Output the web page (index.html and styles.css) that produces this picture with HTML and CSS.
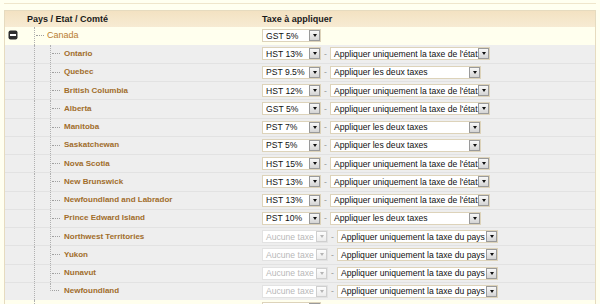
FILE: index.html
```html
<!DOCTYPE html>
<html lang="fr">
<head>
  <meta charset="UTF-8" />
  <title>Taxes par région</title>
  <link rel="stylesheet" href="styles.css">
</head>
<body>
  <div class="top-bar"></div>

  <!-- Tax tree -->
  <div class="tax-tree">
    <div class="head">
      <div class="col-name">Pays / Etat / Comté</div>
      <div class="col-tax">Taxe à appliquer</div>
    </div>

    <div class="row country">
      <div class="col-name">
        <span class="toggle">
          <svg width="10" height="10" viewBox="0 0 10 10"><rect x="0.5" y="0.5" width="9" height="9" rx="2" fill="#2e2e2e"/><rect x="2" y="4" width="6" height="2" fill="#fff"/></svg>
        </span>
        <span class="tee"><i></i></span>
        <span class="name">Canada</span>
      </div>
      <div class="col-tax">
        <span class="select tax"><span class="val">GST 5%</span><span class="arrow"></span></span>
      </div>
    </div>

    <div class="row">
      <div class="col-name"><span class="spacer"></span><span class="pipe"></span><span class="tee sub"><i></i></span><span class="name prov">Ontario</span></div>
      <div class="col-tax">
        <span class="select tax"><span class="val">HST 13%</span><span class="arrow"></span></span>
        <span class="sep">-</span>
        <span class="select mode-state"><span class="val">Appliquer uniquement la taxe de l'état</span><span class="arrow"></span></span>
      </div>
    </div>

    <div class="row">
      <div class="col-name"><span class="spacer"></span><span class="pipe"></span><span class="tee sub"><i></i></span><span class="name prov">Quebec</span></div>
      <div class="col-tax">
        <span class="select tax"><span class="val">PST 9.5%</span><span class="arrow"></span></span>
        <span class="sep">-</span>
        <span class="select mode-both"><span class="val">Appliquer les deux taxes</span><span class="arrow"></span></span>
      </div>
    </div>

    <div class="row">
      <div class="col-name"><span class="spacer"></span><span class="pipe"></span><span class="tee sub"><i></i></span><span class="name prov">British Columbia</span></div>
      <div class="col-tax">
        <span class="select tax"><span class="val">HST 12%</span><span class="arrow"></span></span>
        <span class="sep">-</span>
        <span class="select mode-state"><span class="val">Appliquer uniquement la taxe de l'état</span><span class="arrow"></span></span>
      </div>
    </div>

    <div class="row">
      <div class="col-name"><span class="spacer"></span><span class="pipe"></span><span class="tee sub"><i></i></span><span class="name prov">Alberta</span></div>
      <div class="col-tax">
        <span class="select tax"><span class="val">GST 5%</span><span class="arrow"></span></span>
        <span class="sep">-</span>
        <span class="select mode-state"><span class="val">Appliquer uniquement la taxe de l'état</span><span class="arrow"></span></span>
      </div>
    </div>

    <div class="row">
      <div class="col-name"><span class="spacer"></span><span class="pipe"></span><span class="tee sub"><i></i></span><span class="name prov">Manitoba</span></div>
      <div class="col-tax">
        <span class="select tax"><span class="val">PST 7%</span><span class="arrow"></span></span>
        <span class="sep">-</span>
        <span class="select mode-both"><span class="val">Appliquer les deux taxes</span><span class="arrow"></span></span>
      </div>
    </div>

    <div class="row">
      <div class="col-name"><span class="spacer"></span><span class="pipe"></span><span class="tee sub"><i></i></span><span class="name prov">Saskatchewan</span></div>
      <div class="col-tax">
        <span class="select tax"><span class="val">PST 5%</span><span class="arrow"></span></span>
        <span class="sep">-</span>
        <span class="select mode-both"><span class="val">Appliquer les deux taxes</span><span class="arrow"></span></span>
      </div>
    </div>

    <div class="row">
      <div class="col-name"><span class="spacer"></span><span class="pipe"></span><span class="tee sub"><i></i></span><span class="name prov">Nova Scotia</span></div>
      <div class="col-tax">
        <span class="select tax"><span class="val">HST 15%</span><span class="arrow"></span></span>
        <span class="sep">-</span>
        <span class="select mode-state"><span class="val">Appliquer uniquement la taxe de l'état</span><span class="arrow"></span></span>
      </div>
    </div>

    <div class="row">
      <div class="col-name"><span class="spacer"></span><span class="pipe"></span><span class="tee sub"><i></i></span><span class="name prov">New Brunswick</span></div>
      <div class="col-tax">
        <span class="select tax"><span class="val">HST 13%</span><span class="arrow"></span></span>
        <span class="sep">-</span>
        <span class="select mode-state"><span class="val">Appliquer uniquement la taxe de l'état</span><span class="arrow"></span></span>
      </div>
    </div>

    <div class="row">
      <div class="col-name"><span class="spacer"></span><span class="pipe"></span><span class="tee sub"><i></i></span><span class="name prov">Newfoundland and Labrador</span></div>
      <div class="col-tax">
        <span class="select tax"><span class="val">HST 13%</span><span class="arrow"></span></span>
        <span class="sep">-</span>
        <span class="select mode-state"><span class="val">Appliquer uniquement la taxe de l'état</span><span class="arrow"></span></span>
      </div>
    </div>

    <div class="row">
      <div class="col-name"><span class="spacer"></span><span class="pipe"></span><span class="tee sub"><i></i></span><span class="name prov">Prince Edward Island</span></div>
      <div class="col-tax">
        <span class="select tax"><span class="val">PST 10%</span><span class="arrow"></span></span>
        <span class="sep">-</span>
        <span class="select mode-both"><span class="val">Appliquer les deux taxes</span><span class="arrow"></span></span>
      </div>
    </div>

    <div class="row">
      <div class="col-name"><span class="spacer"></span><span class="pipe"></span><span class="tee sub"><i></i></span><span class="name prov">Northwest Territories</span></div>
      <div class="col-tax">
        <span class="select tax off"><span class="val">Aucune taxe</span><span class="arrow"></span></span>
        <span class="sep">-</span>
        <span class="select mode-country"><span class="val">Appliquer uniquement la taxe du pays</span><span class="arrow"></span></span>
      </div>
    </div>

    <div class="row">
      <div class="col-name"><span class="spacer"></span><span class="pipe"></span><span class="tee sub"><i></i></span><span class="name prov">Yukon</span></div>
      <div class="col-tax">
        <span class="select tax off"><span class="val">Aucune taxe</span><span class="arrow"></span></span>
        <span class="sep">-</span>
        <span class="select mode-country"><span class="val">Appliquer uniquement la taxe du pays</span><span class="arrow"></span></span>
      </div>
    </div>

    <div class="row">
      <div class="col-name"><span class="spacer"></span><span class="pipe"></span><span class="tee sub"><i></i></span><span class="name prov">Nunavut</span></div>
      <div class="col-tax">
        <span class="select tax off"><span class="val">Aucune taxe</span><span class="arrow"></span></span>
        <span class="sep">-</span>
        <span class="select mode-country"><span class="val">Appliquer uniquement la taxe du pays</span><span class="arrow"></span></span>
      </div>
    </div>

    <div class="row">
      <div class="col-name"><span class="spacer"></span><span class="pipe"></span><span class="elbow"><i></i></span><span class="name prov">Newfoundland</span></div>
      <div class="col-tax">
        <span class="select tax off"><span class="val">Aucune taxe</span><span class="arrow"></span></span>
        <span class="sep">-</span>
        <span class="select mode-country"><span class="val">Appliquer uniquement la taxe du pays</span><span class="arrow"></span></span>
      </div>
    </div>

    <!-- next country, only its top edge shows -->
    <div class="row country">
      <div class="col-name">
        <span class="toggle"></span>
        <span class="tee"><i></i></span>
      </div>
      <div class="col-tax">
        <span class="select tax"><span class="val"></span><span class="arrow"></span></span>
      </div>
    </div>
  </div>
</body>
</html>
```

FILE: styles.css
```css
body {
  font-family: "Liberation Sans", Arial, sans-serif;
  margin: 0;
  padding: 0;
  background-color: #fffff0;
  color: #222;
}
.top-bar {
  margin: 0 4px 6px;
  height: 3px;
  border-bottom: 1px solid #efe6cc;
}
.tax-tree {
  margin: 0 4px;
  border: 1px solid #e6dbbf;
  border-bottom: none;
}
.head {
  display: flex;
  align-items: center;
  height: 16px;
  background: linear-gradient(#f3e2c2, #f7ebd3);
  font-size: 9px;
  font-weight: bold;
  color: #1a1a1a;
}
.head .col-name {
  width: 231px;
  padding-left: 22px;
}
.head .col-tax {
  padding-left: 4px;
}
.row {
  display: flex;
  height: 18.25px;
  box-sizing: border-box;
  border-top: 1px solid #e2e2e2;
  background-color: #eeeeee;
}
.row.country {
  height: 17.5px;
  border-top: none;
  background-color: #ffffee;
}
.row.country + .row {
  border-top: none;
}
.row .col-name {
  width: 253px;
  display: flex;
  align-items: stretch;
}
.row .col-tax {
  display: flex;
  align-items: center;
  padding-left: 4px;
}
.toggle {
  width: 26px;
  padding-left: 3px;
  display: flex;
  align-items: center;
}
.toggle svg {
  display: block;
  margin-top: -1px;
}
.spacer {
  width: 29px;
}
.pipe {
  width: 15px;
  border-left: 1px dotted #b0b0b0;
}
.tee {
  width: 12px;
  border-left: 1px dotted #b0b0b0;
  display: flex;
  align-items: center;
}
.tee.sub {
  width: 13px;
}
.tee i,
.elbow i {
  display: block;
  width: 8px;
  margin-left: 1px;
  border-top: 1px dotted #a0a0a0;
}
.elbow {
  width: 14px;
  display: flex;
  flex-direction: column;
}
.elbow i {
  height: 50%;
  margin-left: 0;
  width: 9px;
  box-sizing: border-box;
  border-top: none;
  border-left: 1px dotted #b0b0b0;
  border-bottom: 1px dotted #a0a0a0;
}
.name {
  align-self: center;
  font-size: 9px;
  color: #b97c2f;
  white-space: nowrap;
  margin-top: -1px;
}
.name.prov {
  font-size: 8px;
  font-weight: bold;
  color: #a16d2b;
}
.select {
  display: inline-flex;
  align-items: center;
  height: 13px;
  box-sizing: border-box;
  border: 1px solid #ddd3ba;
  background-color: #fff;
  font-size: 8.6px;
  color: #111;
  overflow: hidden;
}
.select .val {
  flex: 1;
  min-width: 0;
  padding-left: 3px;
  white-space: nowrap;
  overflow: hidden;
}
.select .arrow {
  flex: none;
  width: 11px;
  height: 11px;
  box-sizing: border-box;
  border: 1px solid #9a9a9a;
  background: linear-gradient(#f8f8f8, #d4d4d4);
  display: flex;
  align-items: center;
  justify-content: center;
}
.select .arrow::after {
  content: "";
  border-left: 2.5px solid transparent;
  border-right: 2.5px solid transparent;
  border-top: 3px solid #111;
}
.select.tax {
  width: 59px;
}
.select.tax.off {
  width: 66px;
  border-color: #e2e2e2;
}
.select.off .val {
  color: #b8b8b8;
}
.select.off .arrow {
  border-color: #cfcfcf;
  background: linear-gradient(#fdfdfd, #ececec);
}
.select.off .arrow::after {
  border-top-color: #b5b5b5;
}
.select.mode-state {
  width: 160px;
}
.select.mode-both {
  width: 151px;
}
.select.mode-country {
  width: 161px;
}
.sep {
  width: 9px;
  text-align: center;
  font-size: 8.6px;
  color: #999;
}
```
